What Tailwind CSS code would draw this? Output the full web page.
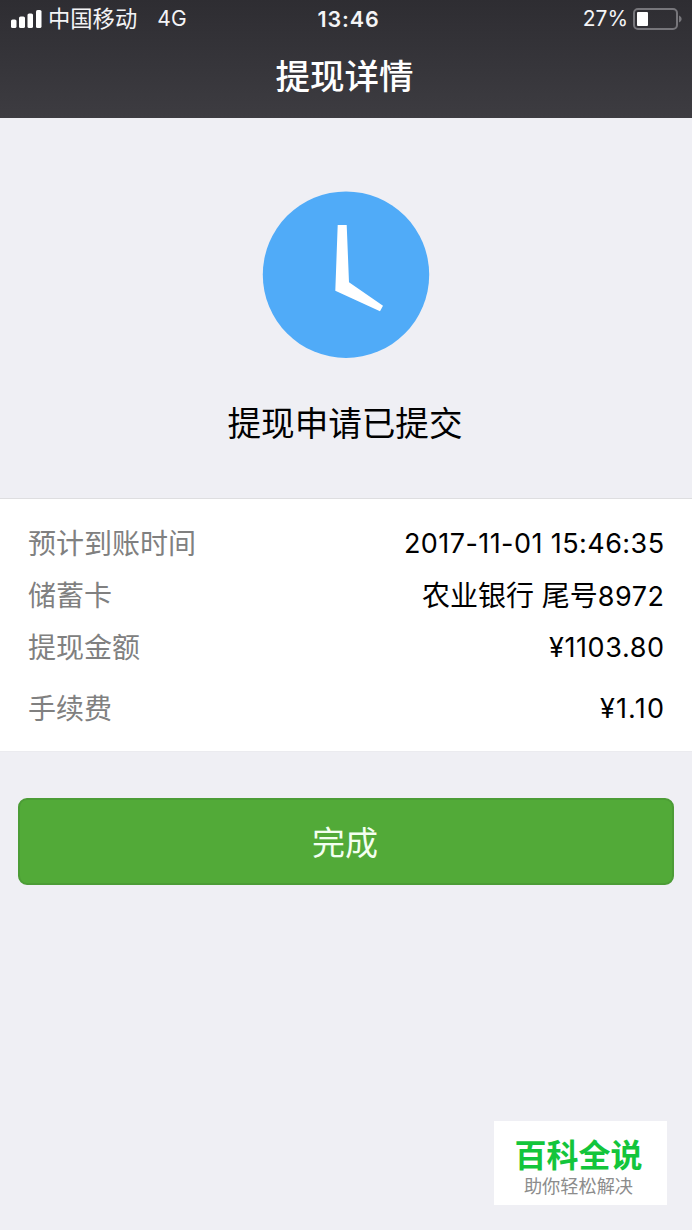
<!DOCTYPE html>
<html lang="zh-CN">
<head>
<meta charset="UTF-8">
<meta name="viewport" content="width=device-width, initial-scale=1.0">
<title>提现详情</title>
<script src="https://cdn.jsdelivr.net/npm/@tailwindcss/browser@4"></script>
</head>
<body class="bg-[#efeff4] font-['Inter','Noto_Sans_CJK_SC',sans-serif] text-black">
<div class="relative w-[692px] h-[1230px] overflow-hidden flex flex-col">

  <header class="h-[118px] shrink-0 bg-linear-to-b from-[#2e2d32] to-[#3d3c41] text-white">
    <!-- status bar -->
    <div class="h-[38px] grid grid-cols-3 items-center pl-[11px] pr-[10px] text-[#f4f4f6]">
      <div class="flex items-center">
        <svg class="w-[31px] h-[19px]" viewBox="0 0 31 19" fill="#fff">
          <rect x="0" y="9.5" width="5.500" height="8.500" rx="1.600"/>
          <rect x="8" y="6.500" width="6" height="11.500" rx="1.600"/>
          <rect x="16.500" y="3.500" width="5.500" height="14.500" rx="1.600"/>
          <rect x="25" y="0" width="5.500" height="18" rx="1.600"/>
        </svg>
        <span class="ml-[6px] text-[22.300px] leading-[38px] whitespace-nowrap">中国移动</span>
        <span class="ml-[20px] text-[21px] leading-[38px] tracking-[0.3px]">4G</span>
      </div>
      <span class="text-center text-[21.500px] leading-[38px] font-semibold tracking-[0.9px] pl-[4px]">13:46</span>
      <div class="flex items-center justify-end">
        <span class="text-[21px] leading-[38px]">27%</span>
        <svg class="ml-[5px] w-[49px] h-[22px]" viewBox="0 0 49 22">
          <rect x="1" y="1" width="43" height="20" rx="4" fill="none" stroke="#77767b" stroke-width="2"/>
          <rect x="4" y="4" width="11" height="14" rx="1" fill="#fff"/>
          <path d="M46 7.500c3.500 1.500 3.500 5.500 0 7z" fill="#77767b"/>
        </svg>
      </div>
    </div>
    <h1 class="text-center text-[34.500px] leading-[78px] font-medium pr-[3px]">提现详情</h1>
  </header>

  <!-- result -->
  <section class="h-[380px] shrink-0 pt-[73px] flex flex-col items-center">
    <svg class="w-[168px] h-[168px]" viewBox="0 0 168 168">
      <circle cx="84" cy="83.700" r="83.200" fill="#50abf8"/>
      <path d="M75.700 34h9l2.300 57.300 34 23.400-3 5.600-44.700-20.500z" fill="#fff"/>
    </svg>
    <p class="mt-[41px] text-[33.600px] leading-[48px] pr-[2px]">提现申请已提交</p>
  </section>

  <!-- details -->
  <section class="h-[254px] shrink-0 bg-white border-y border-t-[#dedee0] border-b-[#ebebef] px-[28px] pt-[19px] text-[28px] leading-[52px]">
    <div class="h-[52px] flex justify-between">
      <span class="text-[#808080]">预计到账时间</span>
      <span class="text-[27px] tracking-[0.430px] -mr-[0.500px]">2017-11-01 15:46:35</span>
    </div>
    <div class="h-[52px] flex justify-between">
      <span class="text-[#808080]">储蓄卡</span>
      <span class="-mr-[0.500px]">农业银行 尾号<span class="text-[27px] leading-none tracking-[0.500px]">8972</span></span>
    </div>
    <div class="h-[52px] flex justify-between">
      <span class="text-[#808080]">提现金额</span>
      <span class="text-[27px] tracking-[0.600px] -mr-[0.600px]">¥1103.80</span>
    </div>
    <div class="h-[52px] flex justify-between mt-[9px]">
      <span class="text-[#808080]">手续费</span>
      <span class="text-[27px] tracking-[1.200px] -mr-[1.200px]">¥1.10</span>
    </div>
  </section>

  <button class="mt-[46px] mx-[18px] h-[87px] shrink-0 rounded-[9px] border-2 border-[#4c9c36] bg-[#52aa38] text-[#f3fff0] text-[33px] leading-[48px] pr-[2px] pt-[2px]">完成</button>

  <!-- corner badge -->
  <div class="absolute left-[494px] top-[1121px] w-[173px] h-[84px] bg-white flex flex-col items-center pt-[15px] pr-[4px]">
    <strong class="text-[32px] leading-[40px] font-bold text-[#13c53b] whitespace-nowrap">百科全说</strong>
    <span class="text-[18.200px] leading-[20px] text-[#8c8c8c] whitespace-nowrap">助你轻松解决</span>
  </div>
</div>
</body>
</html>
